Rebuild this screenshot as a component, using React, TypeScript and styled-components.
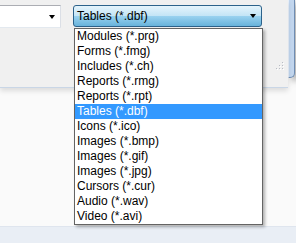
import React from "react";
import styled, { createGlobalStyle } from "styled-components";

const Global = createGlobalStyle`
  html, body { margin: 0; padding: 0; background: #fafafa; }
  body { font-family: "Liberation Sans", Arial, sans-serif; font-size: 12px; }
`;

const Page = styled.div`
  position: relative;
  width: 296px;
  height: 243px;
  overflow: hidden;
  display: flex;
  flex-direction: column;
  background: #fafafa;
`;

const Dialog = styled.div`
  display: flex;
  height: 88px;
`;

const Client = styled.div`
  flex: 1;
  display: flex;
  align-items: flex-start;
  gap: 12px;
  padding-top: 5px;
  background: #f0f0f0;
  border-bottom: 1px solid #c9d6e6;
  box-shadow: 0 3px 5px rgba(0, 0, 0, 0.12);
  position: relative;
  z-index: 1;
`;

const FrameCol = styled.div`
  width: 16px;
  display: flex;
  flex-direction: column;
`;

const Frame = styled.div`
  height: 77px;
  width: 5px;
  background: #c2d6ee;
  border-left: 1px solid #e8f0fa;
  border-right: 1px solid #6f8db3;
  border-bottom: 1px solid #6f8db3;
  border-bottom-right-radius: 5px;
  box-shadow: 4px 3px 6px rgba(0, 0, 0, 0.35);
`;

const EditCombo = styled.div`
  width: 61px;
  height: 23px;
  box-sizing: border-box;
  background: #fff;
  border: 1px solid #abadb3;
  border-left: none;
  border-bottom-color: #e3e9ef;
  border-right-color: #dbdfe6;
  display: flex;
  align-items: center;
  justify-content: flex-end;
  padding-right: 5px;
`;

const DropCombo = styled.div`
  width: 189px;
  height: 22px;
  box-sizing: border-box;
  border: 1px solid #2c628b;
  border-radius: 3px;
  background: linear-gradient(
    to bottom,
    #e5f4fc 0%,
    #c4e5f6 48%,
    #98d1ef 52%,
    #68b3db 100%
  );
  display: flex;
  align-items: center;
  justify-content: space-between;
  padding: 0 5px 0 3px;
  color: #000;
  line-height: 20px;
`;

const Arrow = styled.span`
  width: 0;
  height: 0;
  border-left: 3.5px solid transparent;
  border-right: 3.5px solid transparent;
  border-top: 4px solid #000;
`;

const Grip = styled.svg`
  align-self: flex-end;
  margin-left: auto;
  margin-right: 3px;
  margin-bottom: 16px;
`;

const Desk = styled.div`
  flex: 1;
  background: #fafafa;
`;

const Band = styled.div`
  height: 16px;
  background: #e9eef5;
  border-top: 1px solid #dfe5ee;
`;

const List = styled.ul`
  position: absolute;
  left: 74px;
  top: 28px;
  width: 189px;
  box-sizing: border-box;
  margin: 0;
  padding: 0;
  list-style: none;
  background: #fff;
  border: 1px solid #646464;
  box-shadow: 2px 2px 3px rgba(0, 0, 0, 0.3);
  z-index: 5;
`;

const Item = styled.li<{ $selected?: boolean }>`
  height: 15px;
  line-height: 15px;
  padding-left: 2px;
  white-space: nowrap;
  color: ${(p) => (p.$selected ? "#fff" : "#000")};
  background: ${(p) => (p.$selected ? "#3399ff" : "transparent")};
`;

const items = [
  "Modules (*.prg)",
  "Forms (*.fmg)",
  "Includes (*.ch)",
  "Reports (*.rmg)",
  "Reports (*.rpt)",
  "Tables (*.dbf)",
  "Icons (*.ico)",
  "Images (*.bmp)",
  "Images (*.gif)",
  "Images (*.jpg)",
  "Cursors (*.cur)",
  "Audio (*.wav)",
  "Video (*.avi)",
];

const dots = [
  [8, 2],
  [5, 5],
  [8, 5],
  [2, 8],
  [5, 8],
  [8, 8],
];

export default function App() {
  return (
    <>
      <Global />
      <Page>
        <Dialog>
          <Client>
            <EditCombo>
              <Arrow />
            </EditCombo>
            <DropCombo>
              <span>Tables (*.dbf)</span>
              <Arrow />
            </DropCombo>
            <Grip width="11" height="11" viewBox="0 0 11 11">
              {dots.map(([x, y], i) => (
                <g key={i}>
                  <rect x={x + 1} y={y + 1} width="1" height="1" fill="#ffffff" />
                  <rect x={x} y={y} width="1" height="1" fill="#b8bcc4" />
                </g>
              ))}
            </Grip>
          </Client>
          <FrameCol>
            <Frame />
          </FrameCol>
        </Dialog>
        <Desk />
        <Band />
        <List>
          {items.map((t, i) => (
            <Item key={i} $selected={t === "Tables (*.dbf)"}>
              {t}
            </Item>
          ))}
        </List>
      </Page>
    </>
  );
}
